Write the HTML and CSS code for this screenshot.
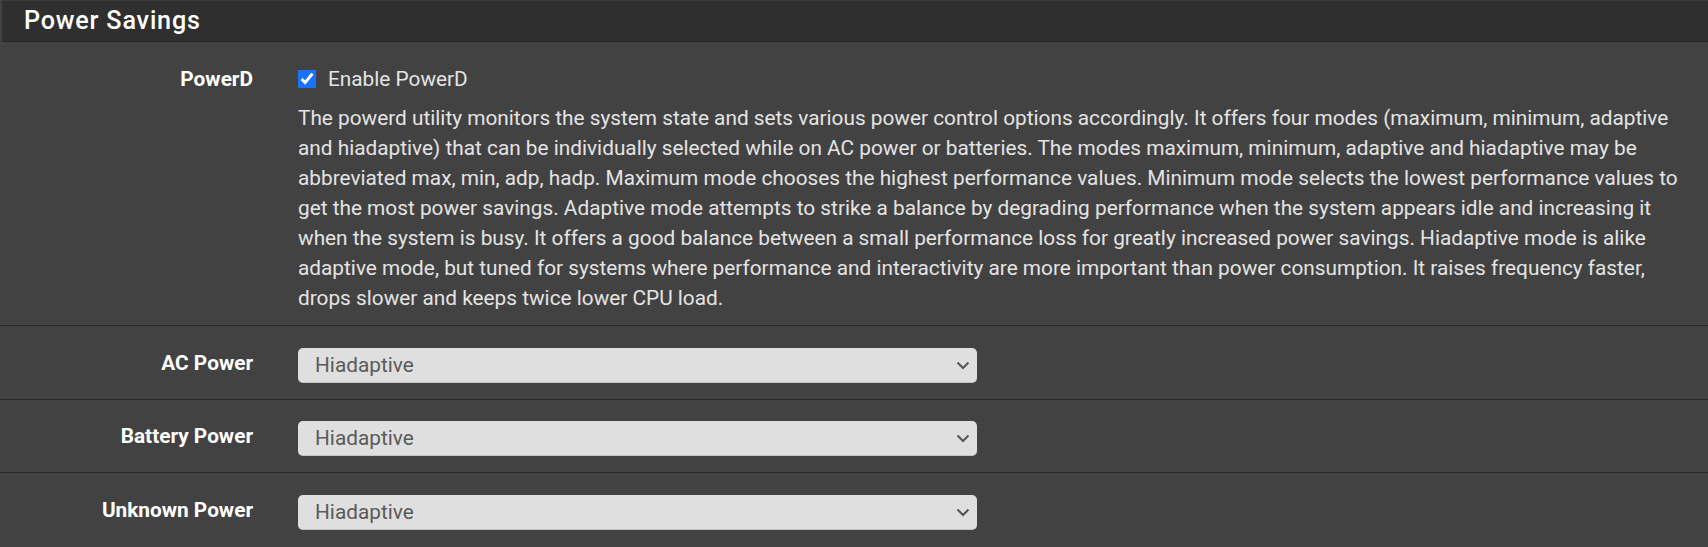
FILE: index.html
```html
<!DOCTYPE html>
<html lang="en">
<head>
<meta charset="utf-8">
<title>Power Savings</title>
<link rel="stylesheet" href="styles.css">
</head>
<body>
<div class="panel">
  <div class="panel-heading">
    <h2 class="panel-title">Power Savings</h2>
  </div>
  <div class="panel-body">
    <div class="form-row">
      <label class="form-label" for="powerd">PowerD</label>
      <div class="form-control-col">
        <div class="checkbox-line">
          <input type="checkbox" id="powerd" class="check" checked>
          <span class="check-text">Enable PowerD</span>
        </div>
        <p class="help">The powerd utility monitors the system state and sets various power control options accordingly. It offers four modes (maximum, minimum, adaptive and hiadaptive) that can be individually selected while on AC power or batteries. The modes maximum, minimum, adaptive and hiadaptive may be abbreviated max, min, adp, hadp. Maximum mode chooses the highest performance values. Minimum mode selects the lowest performance values to get the most power savings. Adaptive mode attempts to strike a balance by degrading performance when the system appears idle and increasing it when the system is busy. It offers a good balance between a small performance loss for greatly increased power savings. Hiadaptive mode is alike adaptive mode, but tuned for systems where performance and interactivity are more important than power consumption. It raises frequency faster, drops slower and keeps twice lower CPU load.</p>
      </div>
    </div>
    <div class="form-row select-row">
      <label class="form-label" for="ac">AC Power</label>
      <div class="form-control-col">
        <div class="select-wrap">
          <select id="ac" class="select"><option>Hiadaptive</option></select>
          <svg class="chev" width="14" height="9" viewBox="0 0 14 9"><path d="M1.5 1.5 L7 7 L12.5 1.5" fill="none" stroke="#555" stroke-width="2"/></svg>
        </div>
      </div>
    </div>
    <div class="form-row select-row">
      <label class="form-label" for="bat">Battery Power</label>
      <div class="form-control-col">
        <div class="select-wrap">
          <select id="bat" class="select"><option>Hiadaptive</option></select>
          <svg class="chev" width="14" height="9" viewBox="0 0 14 9"><path d="M1.5 1.5 L7 7 L12.5 1.5" fill="none" stroke="#555" stroke-width="2"/></svg>
        </div>
      </div>
    </div>
    <div class="form-row select-row last">
      <label class="form-label" for="unk">Unknown Power</label>
      <div class="form-control-col">
        <div class="select-wrap">
          <select id="unk" class="select"><option>Hiadaptive</option></select>
          <svg class="chev" width="14" height="9" viewBox="0 0 14 9"><path d="M1.5 1.5 L7 7 L12.5 1.5" fill="none" stroke="#555" stroke-width="2"/></svg>
        </div>
      </div>
    </div>
  </div>
</div>
</body>
</html>
```

FILE: styles.css
```css
html, body {
  margin: 0;
  padding: 0;
  background: #424242;
}
body {
  font-family: Roboto, "Liberation Sans", sans-serif;
  font-size: 20.8px;
  color: #e4e4e4;
  overflow: hidden;
}
.panel {
  width: 1708px;
}
.panel-heading {
  margin-left: 2px;
  height: 42px;
  background: #2f2f2f;
  border-top: 1px solid #3a3a3a;
  border-bottom: 1px solid #242424;
  box-sizing: border-box;
  padding-left: 22px;
  display: flex;
  align-items: center;
}
.panel-title {
  margin: 0;
  font-size: 25.2px;
  font-weight: 500;
  letter-spacing: 0.8px;
  color: #ffffff;
  line-height: 30px;
}
.form-row {
  display: grid;
  grid-template-columns: 253px 1fr;
  column-gap: 45px;
  padding: 22px 0 12px 0;
  border-bottom: 1px solid #2a2a2a;
}
.select-row {
  padding: 21.5px 0 16px 0;
}
.form-row.last {
  border-bottom: none;
  padding-bottom: 17px;
}
.form-label {
  text-align: right;
  font-weight: 700;
  color: #ffffff;
  line-height: 30px;
}
.form-control-col {
  min-width: 0;
  padding-right: 10px;
}
.checkbox-line {
  display: flex;
  align-items: center;
  height: 30px;
}
.check {
  width: 18px;
  height: 18px;
  margin: 0 12px 0 0;
  accent-color: #1a73ff;
}
.check-text {
  line-height: 30px;
}
.help {
  margin: 9px 0 0 0;
  line-height: 30px;
  color: #e4e4e4;
}
.select-wrap {
  position: relative;
  width: 679px;
}
.select {
  appearance: none;
  -webkit-appearance: none;
  display: block;
  width: 100%;
  height: 35px;
  margin: 0;
  padding: 0 40px 0 17px;
  border: none;
  border-bottom: 1px solid #c4c4c4;
  border-radius: 5px;
  background: #dfdfdf;
  color: #5a5a5a;
  font-family: Roboto, "Liberation Sans", sans-serif;
  font-size: 20.8px;
  line-height: 35px;
  box-sizing: border-box;
}
.chev {
  position: absolute;
  right: 7px;
  top: 13px;
  pointer-events: none;
}
```
